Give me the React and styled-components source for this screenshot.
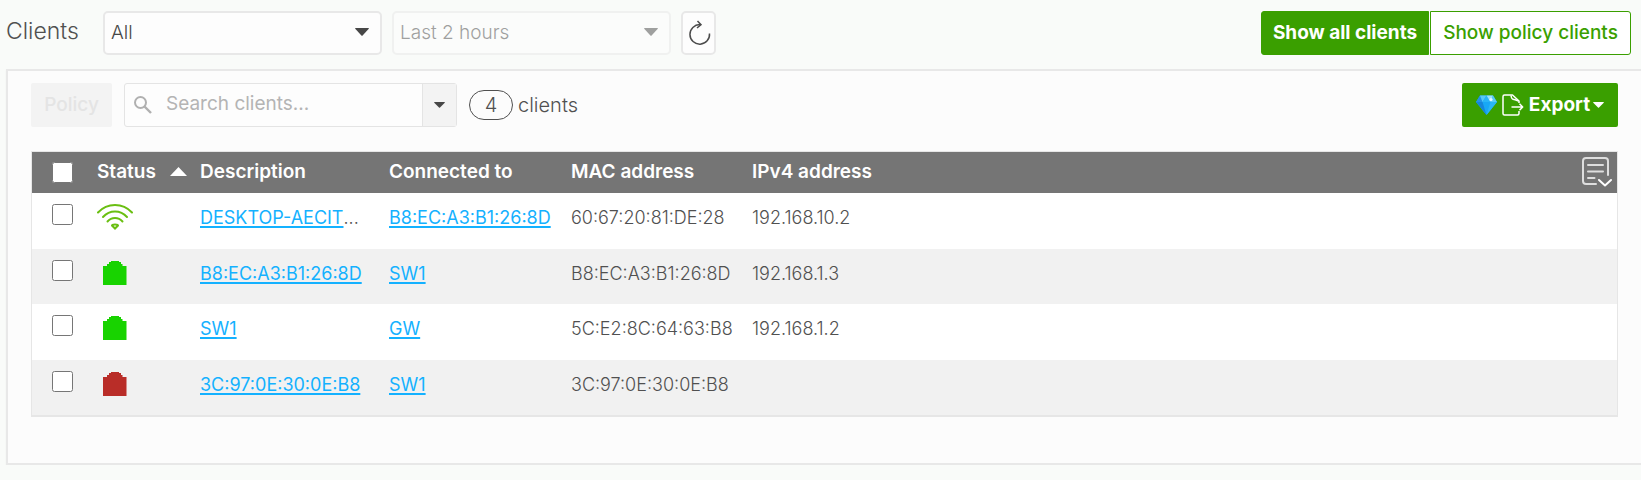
import React, { useState } from 'react';
import styled, { createGlobalStyle, css } from 'styled-components';

const GlobalStyle = createGlobalStyle`
  * {
    box-sizing: border-box;
  }
  body {
    margin: 0;
    background: #f9fbf9;
    color: #505050;
    font-family: Inter, "Liberation Sans", sans-serif;
    font-size: 19px;
    line-height: 24px;
  }
  button, input, select {
    font: inherit;
    color: inherit;
  }
`;

const TopBar = styled.header`
  display: flex;
  align-items: center;
  gap: 10px;
  padding: 11px 10px 14px 6px;
`;

const Title = styled.h1`
  width: 87px;
  margin: 0;
  padding-bottom: 5px;
  font-size: 23px;
  font-weight: 300;
  line-height: 28px;
`;

const SelectWrap = styled.div`
  position: relative;
  width: 279px;
  opacity: ${({ $faded }) => ($faded ? 0.5 : 1)};
  > svg {
    position: absolute;
    top: 17px;
    right: 13px;
    pointer-events: none;
  }
`;

const Select = styled.select`
  display: block;
  width: 100%;
  height: 44px;
  padding: 0 36px 0 6px;
  border: 2px solid #e8e8e8;
  border-radius: 5px;
  background: #fdfdfd;
  appearance: none;
  font-weight: 300;
  color: #474747;
  opacity: 1;
`;

const RefreshButton = styled.button`
  display: flex;
  align-items: center;
  justify-content: center;
  width: 35px;
  height: 44px;
  padding: 0;
  border: 2px solid #e8e8e8;
  border-radius: 5px;
  background: #fdfdfd;
  cursor: pointer;
`;

const ViewSwitch = styled.div`
  display: flex;
  gap: 1px;
  margin-left: auto;
`;

const ViewButton = styled.button`
  width: ${({ $wide }) => ($wide ? 201 : 168)}px;
  height: 44px;
  padding: 0 0 1px;
  border: 1px solid #3a9f00;
  border-radius: ${({ $wide }) => ($wide ? '0 3px 3px 0' : '3px 0 0 3px')};
  background: #fff;
  color: #3a9f00;
  font-weight: 500;
  white-space: nowrap;
  cursor: pointer;
  ${({ $active }) => $active && css`
    background: #3a9f00;
    color: #fff;
    font-weight: 700;
  `}
`;

const Panel = styled.main`
  margin-left: 6px;
  padding: 12px 23px 46px;
  border: 2px solid #e8e8e8;
  border-right: 0;
  background: #fcfcfc;
  box-shadow: 0 1px 2px rgba(0, 0, 0, 0.04);
`;

const Toolbar = styled.div`
  display: flex;
  align-items: center;
  gap: 12px;
  margin-bottom: 24px;
`;

const PolicyButton = styled.button`
  width: 81px;
  height: 44px;
  padding: 0;
  border: 0;
  border-radius: 2px;
  background: #f3f3f3;
  color: #e4e4e4;
  font-weight: 500;
`;

const SearchBox = styled.div`
  display: flex;
  align-items: center;
  width: 333px;
  height: 44px;
  padding-left: 8px;
  border: 1px solid #e4e4e4;
  border-radius: 3px;
  background: #fdfdfd;
`;

const SearchInput = styled.input`
  flex: 1;
  min-width: 0;
  height: 42px;
  padding: 0 8px 4px 13px;
  border: 0;
  background: none;
  &::placeholder {
    color: #b4b4b4;
    opacity: 1;
  }
`;

const SearchToggle = styled.button`
  display: flex;
  align-items: center;
  justify-content: center;
  width: 34px;
  height: 42px;
  padding: 0;
  border: 0;
  border-left: 1px solid #e4e4e4;
  background: #f3f3f3;
`;

const Count = styled.div`
  display: flex;
  align-items: center;
  gap: 5px;
  font-size: 20px;
  font-weight: 300;
`;

const Badge = styled.span`
  width: 44px;
  height: 30px;
  border: 1px solid #505050;
  border-radius: 15px;
  line-height: 28px;
  text-align: center;
`;

const ExportButton = styled.button`
  display: flex;
  align-items: center;
  justify-content: center;
  gap: 5px;
  width: 156px;
  height: 44px;
  margin-left: auto;
  padding: 0;
  border: 0;
  border-radius: 2px;
  background: #3a9f00;
  color: #fff;
  font-weight: 700;
  cursor: pointer;
`;

const ExportLabel = styled.span`
  display: flex;
  align-items: center;
  gap: 3px;
`;

const TableFrame = styled.div`
  border: solid #e6e6e6;
  border-width: 1px 1px 2px;
`;

const Table = styled.table`
  width: 100%;
  border-collapse: collapse;
  table-layout: fixed;
  text-align: left;
`;

const HeadCell = styled.th`
  width: ${({ $width }) => ($width ? `${$width}px` : 'auto')};
  height: 41px;
  padding: ${({ $check }) => ($check ? '0 0 0 20px' : '0 5px 2px 8px')};
  background: #757575;
  color: #fff;
  font-weight: 600;
  white-space: nowrap;
`;

const HeadContent = styled.div`
  display: flex;
  align-items: center;
  justify-content: space-between;
`;

const ColumnsButton = styled.button`
  display: flex;
  padding: 0;
  border: 0;
  background: none;
`;

const Row = styled.tr`
  height: 56px;
  background: #fff;
  &:nth-child(even) {
    height: 55px;
    background: #f1f1f1;
  }
`;

const Cell = styled.td`
  padding: 13px 8px 0;
  overflow: hidden;
  vertical-align: top;
  font-size: 18px;
  font-weight: 300;
  white-space: nowrap;
`;

const IconCell = styled.td`
  padding: 10px 8px 0;
  vertical-align: top;
  > svg {
    display: block;
  }
`;

const CheckCell = styled.td`
  padding: 11px 0 0 20px;
  vertical-align: top;
`;

const Checkbox = styled.input`
  display: block;
  width: 21px;
  height: 21px;
  margin: 0;
`;

const Link = styled.a`
  color: #14b1ff;
  font-weight: 400;
  text-decoration: underline;
  text-decoration-thickness: 2px;
  text-underline-offset: 2px;
  text-decoration-skip-ink: none;
`;

const Caret = ({ width = 14, height = 8, color = '#474747' }) => (
  <svg width={width} height={height} viewBox="0 0 14 8" preserveAspectRatio="none" aria-hidden="true">
    <path d="M0 0.5Q0 0 0.8 0H13.2Q14 0 14 0.5L7.6 7.4Q7 8 6.4 7.4Z" fill={color} />
  </svg>
);

const RefreshIcon = () => (
  <svg width="24" height="26" viewBox="0 0 24 26" fill="none" stroke="#4c4c4c" strokeWidth="1.5" aria-hidden="true">
    <path d="M22.5 13.5A9.8 9.8 0 1 1 13 4.6" />
    <path d="M10.5 1L14 4.7L10 8" />
  </svg>
);

const SearchIcon = () => (
  <svg width="20" height="20" viewBox="0 0 20 20" fill="none" stroke="#b0b0b0" strokeWidth="2" aria-hidden="true">
    <circle cx="7.5" cy="7.5" r="5.5" />
    <path d="M11.5 11.5L18 18" strokeWidth="2.4" />
  </svg>
);

const GemIcon = () => (
  <svg width="21" height="20" viewBox="0 0 21 20" aria-hidden="true">
    <path d="M4 0.5H17L21 7L10.5 20L0 7Z" fill="#18a8f5" />
    <path d="M4 0.5L6.5 7H0Z" fill="#2292e6" />
    <path d="M4 0.5H10.5L6.5 7Z" fill="#59c8f5" />
    <path d="M10.5 0.5L14.5 7H6.5Z" fill="#28b5f6" />
    <path d="M10.5 0.5H17L14.5 7Z" fill="#9be2fa" />
    <path d="M17 0.5L21 7H14.5Z" fill="#58caf6" />
    <path d="M0 7H6.5L10.5 20Z" fill="#1585da" />
    <path d="M21 7H14.5L10.5 20Z" fill="#29b6f6" />
    <circle cx="15" cy="4.5" r="1.6" fill="#e5f8ff" />
  </svg>
);

const ExportIcon = () => (
  <svg width="22" height="22" viewBox="0 0 22 22" fill="none" stroke="#fff" strokeWidth="1.5" strokeLinejoin="round" aria-hidden="true">
    <path d="M17 17V19.5Q17 21 15.5 21H2.5Q1 21 1 19.5V2.5Q1 1 2.5 1H10.5L17 7V9" />
    <path d="M9 1.5Q9.5 5 11 5.2T16.5 7" />
    <path d="M9.5 13H20.5M17.5 9.8L20.7 13L17.5 16.2" />
  </svg>
);

const ColumnsIcon = () => (
  <svg width="30" height="30" viewBox="0 0 30 30" fill="none" stroke="#dedede" strokeWidth="2" strokeLinecap="round" strokeLinejoin="round" aria-hidden="true">
    <path d="M14 27H4Q1 27 1 24V4Q1 1 4 1H23Q26 1 26 4V18" />
    <path d="M6 8H21M6 14.5H21M6 21H12.5" />
    <path d="M17 23L23 28.5L29 23" stroke="#fff" />
  </svg>
);

const WifiIcon = () => (
  <svg width="36" height="27" viewBox="0 0 36 27" fill="none" stroke="#6abf12" strokeWidth="2" strokeLinecap="round" aria-hidden="true">
    <path d="M1 9.5Q8 2 18 2T35 9.5" />
    <path d="M6 14Q11 8.5 18 8.5T30 14" />
    <path d="M10.5 18.5Q13.5 15 18 15T25.5 18.5" />
    <path d="M15 22.5Q15 21.5 18 21.5T21 22.5L18 25.5Z" />
  </svg>
);

const PortIcon = ({ color }) => (
  <svg width="36" height="27" viewBox="0 0 36 27" aria-hidden="true">
    <path d="M6 26V7H10V5H12V3H14V2H22V3H24V5H25.5V7H29.5V26Z" fill={color} />
  </svg>
);

const statusIcons = {
  wifi: <WifiIcon />,
  online: <PortIcon color="#18d300" />,
  offline: <PortIcon color="#b92d28" />,
};

const clients = [
  { status: 'wifi', name: 'DESKTOP-AECIT', cut: true, parent: 'B8:EC:A3:B1:26:8D', mac: '60:67:20:81:DE:28', ip: '192.168.10.2' },
  { status: 'online', name: 'B8:EC:A3:B1:26:8D', parent: 'SW1', mac: 'B8:EC:A3:B1:26:8D', ip: '192.168.1.3' },
  { status: 'online', name: 'SW1', parent: 'GW', mac: '5C:E2:8C:64:63:B8', ip: '192.168.1.2' },
  { status: 'offline', name: '3C:97:0E:30:0E:B8', parent: 'SW1', mac: '3C:97:0E:30:0E:B8', ip: '' },
];

const ClientRow = ({ client, checked, onToggle }) => (
  <Row>
    <CheckCell>
      <Checkbox type="checkbox" aria-label={`Select ${client.name}`} checked={checked} onChange={onToggle} />
    </CheckCell>
    <IconCell>{statusIcons[client.status]}</IconCell>
    <Cell><Link href="#client">{client.name}</Link>{client.cut && '...'}</Cell>
    <Cell><Link href="#device">{client.parent}</Link></Cell>
    <Cell>{client.mac}</Cell>
    <Cell>{client.ip}</Cell>
  </Row>
);

const App = () => {
  const [selected, setSelected] = useState([]);
  const [view, setView] = useState('all');
  const allSelected = selected.length === clients.length;

  const toggle = mac => setSelected(
    selected.includes(mac) ? selected.filter(m => m !== mac) : [...selected, mac]
  );
  const toggleAll = () => setSelected(allSelected ? [] : clients.map(c => c.mac));

  return (
    <>
      <GlobalStyle />
      <TopBar>
        <Title>Clients</Title>
        <SelectWrap>
          <Select aria-label="Client type"><option>All</option></Select>
          <Caret />
        </SelectWrap>
        <SelectWrap $faded>
          <Select aria-label="Time range" disabled><option>Last 2 hours</option></Select>
          <Caret />
        </SelectWrap>
        <RefreshButton aria-label="Refresh"><RefreshIcon /></RefreshButton>
        <ViewSwitch>
          <ViewButton $active={view === 'all'} onClick={() => setView('all')}>Show all clients</ViewButton>
          <ViewButton $wide $active={view === 'policy'} onClick={() => setView('policy')}>Show policy clients</ViewButton>
        </ViewSwitch>
      </TopBar>
      <Panel>
        <Toolbar>
          <PolicyButton disabled>Policy</PolicyButton>
          <SearchBox>
            <SearchIcon />
            <SearchInput type="text" aria-label="Search clients" placeholder="Search clients..." />
            <SearchToggle aria-label="Search options"><Caret width={11} height={6} /></SearchToggle>
          </SearchBox>
          <Count><Badge>{clients.length}</Badge>clients</Count>
          <ExportButton>
            <GemIcon />
            <ExportIcon />
            <ExportLabel>
              Export
              <Caret width={11} height={6} color="#fff" />
            </ExportLabel>
          </ExportButton>
        </Toolbar>
        <TableFrame>
          <Table>
            <thead>
              <tr>
                <HeadCell $width={57} $check>
                  <Checkbox type="checkbox" aria-label="Select all clients" checked={allSelected} onChange={toggleAll} />
                </HeadCell>
                <HeadCell $width={103}>
                  <HeadContent>
                    Status
                    <svg width="17" height="9" viewBox="0 0 17 9" aria-hidden="true">
                      <path d="M0 9L8.5 0L17 9Z" fill="#fff" />
                    </svg>
                  </HeadContent>
                </HeadCell>
                <HeadCell $width={189}>Description</HeadCell>
                <HeadCell $width={182}>Connected to</HeadCell>
                <HeadCell $width={181}>MAC address</HeadCell>
                <HeadCell>
                  <HeadContent>
                    IPv4 address
                    <ColumnsButton aria-label="Choose columns"><ColumnsIcon /></ColumnsButton>
                  </HeadContent>
                </HeadCell>
              </tr>
            </thead>
            <tbody>
              {clients.map(c => (
                <ClientRow key={c.mac} client={c} checked={selected.includes(c.mac)} onToggle={() => toggle(c.mac)} />
              ))}
            </tbody>
          </Table>
        </TableFrame>
      </Panel>
    </>
  );
};

export default App;
